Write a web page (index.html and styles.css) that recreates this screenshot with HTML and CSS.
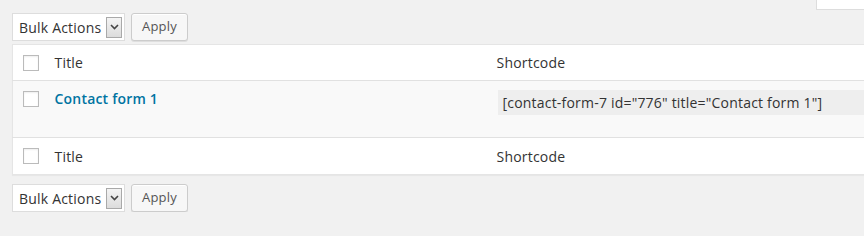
FILE: index.html
```html
<!DOCTYPE html>
<html lang="en">
<head>
    <meta charset="UTF-8">
    <title>Contact Forms</title>
    <link rel="stylesheet" href="styles.css">
</head>
<body>
    <div class="wrap">
        <div class="search-row">
            <div class="search-box"></div>
        </div>

        <div class="tablenav">
            <div class="bulk-select">
                <span class="bulk-label">Bulk Actions</span>
                <span class="bulk-arrow">
                    <svg width="9" height="6" viewBox="0 0 9 6"><path d="M1 1 L4.5 4.5 L8 1" fill="none" stroke="#444" stroke-width="1.6"/></svg>
                </span>
            </div>
            <button class="button">Apply</button>
        </div>

        <table class="list-table">
            <colgroup>
                <col class="col-check">
                <col class="col-title">
                <col>
            </colgroup>
            <thead>
                <tr>
                    <th class="check-column"><span class="checkbox"></span></th>
                    <th>Title</th>
                    <th>Shortcode</th>
                </tr>
            </thead>
            <tbody>
                <tr class="alternate">
                    <td class="check-column"><span class="checkbox"></span></td>
                    <td><a class="row-title" href="#">Contact form 1</a></td>
                    <td><input class="shortcode" type="text" readonly value='[contact-form-7 id="776" title="Contact form 1"]'></td>
                </tr>
            </tbody>
            <tfoot>
                <tr>
                    <th class="check-column"><span class="checkbox"></span></th>
                    <th>Title</th>
                    <th>Shortcode</th>
                </tr>
            </tfoot>
        </table>

        <div class="tablenav">
            <div class="bulk-select">
                <span class="bulk-label">Bulk Actions</span>
                <span class="bulk-arrow">
                    <svg width="9" height="6" viewBox="0 0 9 6"><path d="M1 1 L4.5 4.5 L8 1" fill="none" stroke="#444" stroke-width="1.6"/></svg>
                </span>
            </div>
            <button class="button">Apply</button>
        </div>
    </div>
</body>
</html>
```

FILE: styles.css
```css
body {
    margin: 0;
    background: #f1f1f1;
    font-family: 'Open Sans', 'Liberation Sans', sans-serif;
    font-size: 13px;
    letter-spacing: 0.2px;
    color: #333;
    overflow: hidden;
}

.wrap {
    padding-left: 12px;
    width: 900px;
}

.search-row {
    height: 13px;
    display: flex;
}

.search-box {
    margin-left: 804px;
    margin-top: -20px;
    width: 80px;
    height: 28px;
    background: #fff;
    border: 1px solid #ddd;
}

.tablenav {
    display: flex;
    gap: 6px;
    height: 28px;
}

.bulk-select {
    display: flex;
    align-items: center;
    height: 26px;
    background: #fff;
    border: 1px solid #ddd;
    padding: 0 2px 0 6px;
    width: 103px;
}

.bulk-label {
    flex: 1;
    font-size: 14px;
    color: #333;
    white-space: nowrap;
}

.bulk-arrow {
    display: flex;
    align-items: center;
    justify-content: center;
    width: 14px;
    height: 19px;
    border: 1px solid #a9a9a9;
    background: linear-gradient(#f4f4f4, #dcdcdc);
}

.button {
    font-family: inherit;
    font-size: 13px;
    letter-spacing: 0.2px;
    color: #555;
    background: #f7f7f7;
    border: 1px solid #ccc;
    border-radius: 3px;
    box-shadow: inset 0 1px 0 #fff, 0 1px 0 rgba(0, 0, 0, 0.08);
    height: 28px;
    padding: 0 0 2px;
    width: 57px;
}

.list-table {
    border-collapse: collapse;
    table-layout: fixed;
    width: 880px;
    margin: 3px 0 9px;
    background: #fff;
    border: 1px solid #e5e5e5;
    box-shadow: 0 1px 1px rgba(0, 0, 0, 0.04);
}

.col-check {
    width: 42px;
}

.col-title {
    width: 442px;
}

.list-table th {
    text-align: left;
    font-weight: normal;
    font-size: 14px;
    color: #333;
    height: 35px;
    padding: 0;
    vertical-align: middle;
}

.list-table thead tr {
    border-bottom: 1px solid #e1e1e1;
}

.list-table tfoot tr {
    border-top: 1px solid #e1e1e1;
}

.list-table tfoot th {
    height: 36px;
}

.list-table td {
    vertical-align: top;
    height: 56px;
    padding: 0;
}

.alternate {
    background: #f9f9f9;
}

.check-column {
    padding-left: 10px !important;
}

.checkbox {
    display: block;
    width: 14px;
    height: 14px;
    border: 1px solid #bbb;
    background: #fff;
    box-shadow: inset 0 1px 2px rgba(0, 0, 0, 0.07);
}

.list-table td.check-column .checkbox {
    margin-top: 10px;
}

.row-title {
    display: block;
    margin-top: 8px;
    font-size: 14px;
    font-weight: 600;
    color: #0074a2;
    text-decoration: none;
}

.shortcode {
    display: block;
    margin: 9px 0 0 1px;
    width: 400px;
    height: 25px;
    box-sizing: border-box;
    border: 0;
    background: #eee;
    font-family: inherit;
    font-size: 14px;
    letter-spacing: 0.2px;
    color: #333;
    padding: 0 5px;
}
```
